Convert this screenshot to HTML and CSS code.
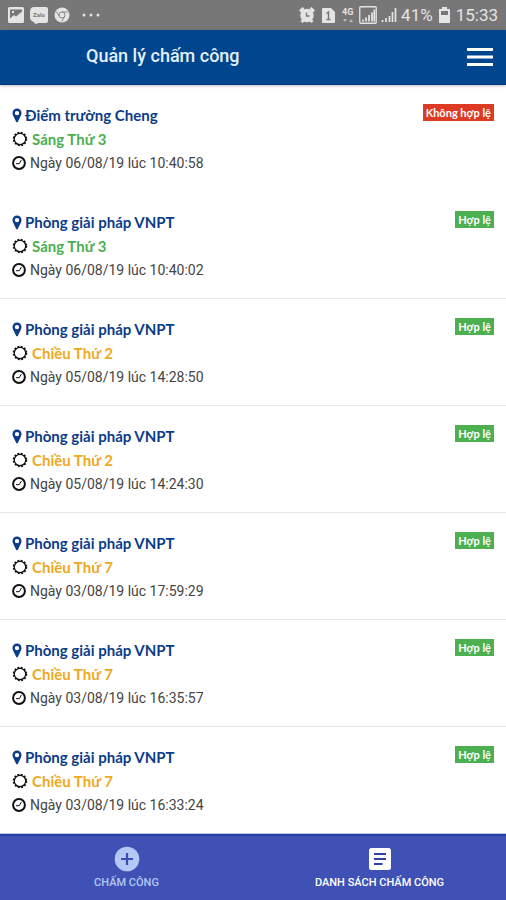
FILE: index.html
```html
<!DOCTYPE html>
<html lang="vi">
<head>
<meta charset="utf-8">
<meta name="viewport" content="width=device-width, initial-scale=1">
<title>Quản lý chấm công</title>
<link rel="stylesheet" href="styles.css">
</head>
<body>
<svg class="sprite" aria-hidden="true">
  <symbol id="pin" viewBox="0 0 10 15"><path fill="currentColor" fill-rule="evenodd" d="M5 0.5a4.5 4.5 0 0 1 4.5 4.5c0 1-.2 1.700-.6 2.500L5.900 13.800a1 1 0 0 1-1.800 0L1.100 7.500C.7 6.700.5 6 .5 5A4.500 4.500 0 0 1 5 .5zM5 2.900a2.200 2.200 0 1 0 0 4.400a2.200 2.200 0 0 0 0-4.400z"/></symbol>
  <symbol id="sun" viewBox="0 0 16 16"><circle cx="8" cy="8" r="5.700" fill="none" stroke="currentColor" stroke-width="1.200"/><circle cx="8" cy="8" r="6.300" fill="none" stroke="currentColor" stroke-width="1.900" stroke-dasharray="1.900 1.398"/></symbol>
  <symbol id="clock" viewBox="0 0 14 14"><circle cx="7" cy="7" r="5.900" fill="none" stroke="currentColor" stroke-width="2"/><path d="M4 7.700H7.300L9.400 4" fill="none" stroke="currentColor" stroke-width="1"/></symbol>
</svg>

<div class="status">
  <div class="status-group">
    <svg width="16" height="16" viewBox="0 0 16 16"><path fill="#e4e4e4" fill-rule="evenodd" d="M1.500 0h13A1.500 1.500 0 0 1 16 1.500v13a1.500 1.500 0 0 1-1.500 1.500h-13A1.500 1.500 0 0 1 0 14.500v-13A1.500 1.500 0 0 1 1.500 0zM2 2.500v9l4-3.500 2 1.500 6-5V2.500zM4 4h2v2H4z"/></svg>
    <svg width="18" height="17" viewBox="0 0 18 17"><path fill="#e4e4e4" d="M4 0h12q2 0 2 2v12q0 2-2 2H9l-4 1-1-2q-4-1-4-5V5q0-5 4-5z"/><text x="9" y="10" text-anchor="middle" class="zalo">Zalo</text></svg>
    <svg width="16" height="16" viewBox="0 0 16 16"><circle cx="8" cy="8" r="7.500" fill="#e4e4e4"/><circle cx="8" cy="8" r="3" fill="none" stroke="#888" stroke-width="1"/><path d="M8 5h6M5.400 9.500 2.500 4.500M10.600 9.500 7.700 14.500" stroke="#888" stroke-width="1"/></svg>
    <svg class="dots" width="18" height="4" viewBox="0 0 18 4"><g fill="#e4e4e4"><circle cx="2" cy="2" r="1.500"/><circle cx="9" cy="2" r="1.500"/><circle cx="16" cy="2" r="1.500"/></g></svg>
  </div>
  <div class="status-group status-right">
    <svg class="alarm" width="16" height="16" viewBox="0 0 16 16"><path stroke="#e4e4e4" stroke-width="3" d="M1 4.500 4.500 1M11.500 1 15 4.500M2.500 15l2-2M13.500 15l-2-2"/><circle cx="8" cy="8.500" r="6.700" fill="#e4e4e4"/><path d="M7.500 5.500V9h3" fill="none" stroke="#777" stroke-width="1.300"/></svg>
    <svg class="sim" width="13" height="15" viewBox="0 0 13 15"><path fill="#e4e4e4" d="M1 0h8l4 4v10q0 1-1 1H1q-1 0-1-1V1q0-1 1-1z"/><path d="M4.500 5.500 6.500 4v7.500M4.500 11.500h4" fill="none" stroke="#777" stroke-width="1.400"/></svg>
    <svg width="13" height="16" viewBox="0 0 13 16"><text x="0" y="8" class="net">4G</text><path fill="#bbb" d="M1 12h4l-2 3zM7 15h4l-2-3z"/></svg>
    <svg width="18" height="18" viewBox="0 0 18 18"><rect x=".75" y=".75" width="16.500" height="16.500" rx="1" fill="none" stroke="#e4e4e4" stroke-width="1.300"/><path stroke="#e4e4e4" stroke-width="1.800" d="M4 15.500v-2M7 15.500v-4M10 15.500V9M13 15.500v-9M15.300 15.500V3.500"/></svg>
    <svg width="16" height="18" viewBox="0 0 16 18"><path stroke="#e4e4e4" stroke-width="1.700" d="M1.500 16v-2M5 16v-4M8.500 16v-6M11.500 16V6M14.500 16V2"/></svg>
    <span>41%</span>
    <svg class="battery" width="11" height="16" viewBox="0 0 11 16"><path fill="#e4e4e4" fill-rule="evenodd" d="M3 0h5v2h3v14H0V2h3zM2 4v4h7V4z"/></svg>
    <span>15:33</span>
  </div>
</div>

<header class="bar">
  <h1>Quản lý chấm công</h1>
  <button class="menu" type="button" aria-label="Menu"><svg width="26" height="20" viewBox="0 0 26 20"><path stroke="#fff" stroke-width="3" d="M0 2.500h26M0 10h26M0 17.500h26"/></svg></button>
</header>

<main>
  <ul class="list">
    <li class="item plain">
      <div class="info">
        <h2 class="line place"><svg class="icon pin"><use href="#pin"/></svg>Điểm trường Cheng</h2>
        <p class="line shift morning"><svg class="icon sun"><use href="#sun"/></svg>Sáng Thứ 3</p>
        <p class="line time"><svg class="icon clock"><use href="#clock"/></svg>Ngày 06/08/19 lúc 10:40:58</p>
      </div>
      <span class="badge invalid">Không hợp lệ</span>
    </li>
    <li class="item">
      <div class="info">
        <h2 class="line place"><svg class="icon pin"><use href="#pin"/></svg>Phòng giải pháp VNPT</h2>
        <p class="line shift morning"><svg class="icon sun"><use href="#sun"/></svg>Sáng Thứ 3</p>
        <p class="line time"><svg class="icon clock"><use href="#clock"/></svg>Ngày 06/08/19 lúc 10:40:02</p>
      </div>
      <span class="badge">Hợp lệ</span>
    </li>
    <li class="item">
      <div class="info">
        <h2 class="line place"><svg class="icon pin"><use href="#pin"/></svg>Phòng giải pháp VNPT</h2>
        <p class="line shift"><svg class="icon sun"><use href="#sun"/></svg>Chiều Thứ 2</p>
        <p class="line time"><svg class="icon clock"><use href="#clock"/></svg>Ngày 05/08/19 lúc 14:28:50</p>
      </div>
      <span class="badge">Hợp lệ</span>
    </li>
    <li class="item">
      <div class="info">
        <h2 class="line place"><svg class="icon pin"><use href="#pin"/></svg>Phòng giải pháp VNPT</h2>
        <p class="line shift"><svg class="icon sun"><use href="#sun"/></svg>Chiều Thứ 2</p>
        <p class="line time"><svg class="icon clock"><use href="#clock"/></svg>Ngày 05/08/19 lúc 14:24:30</p>
      </div>
      <span class="badge">Hợp lệ</span>
    </li>
    <li class="item">
      <div class="info">
        <h2 class="line place"><svg class="icon pin"><use href="#pin"/></svg>Phòng giải pháp VNPT</h2>
        <p class="line shift"><svg class="icon sun"><use href="#sun"/></svg>Chiều Thứ 7</p>
        <p class="line time"><svg class="icon clock"><use href="#clock"/></svg>Ngày 03/08/19 lúc 17:59:29</p>
      </div>
      <span class="badge">Hợp lệ</span>
    </li>
    <li class="item">
      <div class="info">
        <h2 class="line place"><svg class="icon pin"><use href="#pin"/></svg>Phòng giải pháp VNPT</h2>
        <p class="line shift"><svg class="icon sun"><use href="#sun"/></svg>Chiều Thứ 7</p>
        <p class="line time"><svg class="icon clock"><use href="#clock"/></svg>Ngày 03/08/19 lúc 16:35:57</p>
      </div>
      <span class="badge">Hợp lệ</span>
    </li>
    <li class="item">
      <div class="info">
        <h2 class="line place"><svg class="icon pin"><use href="#pin"/></svg>Phòng giải pháp VNPT</h2>
        <p class="line shift"><svg class="icon sun"><use href="#sun"/></svg>Chiều Thứ 7</p>
        <p class="line time"><svg class="icon clock"><use href="#clock"/></svg>Ngày 03/08/19 lúc 16:33:24</p>
      </div>
      <span class="badge">Hợp lệ</span>
    </li>
  </ul>
</main>

<nav class="tabs">
  <button class="tab" type="button">
    <svg width="26" height="26" viewBox="0 0 26 26"><circle cx="13" cy="13" r="12.300" fill="currentColor"/><path stroke="#3b4db3" stroke-width="2.200" d="M13 7v12M7 13h12"/></svg>
    CHẤM CÔNG
  </button>
  <button class="tab active" type="button" aria-current="page">
    <svg width="26" height="26" viewBox="0 0 26 26"><rect x="2" y="2" width="22" height="22" rx="2.500" fill="currentColor"/><path stroke="#3040a8" stroke-width="2.200" d="M7 8h12M7 13h12M7 18h8.500"/></svg>
    DANH SÁCH CHẤM CÔNG
  </button>
</nav>
</body>
</html>
```

FILE: styles.css
```css
* {
  box-sizing: border-box;
}

body {
  display: flex;
  flex-direction: column;
  min-height: 100vh;
  margin: 0;
  background: #fff;
  font-family: Roboto, "Liberation Sans", sans-serif;
}

h1, h2, p, ul {
  margin: 0;
  padding: 0;
}

button {
  padding: 0;
  border: 0;
  background: none;
  font: inherit;
  cursor: pointer;
}

svg {
  flex: none;
}

.sprite {
  display: none;
}

.status {
  display: flex;
  align-items: center;
  justify-content: space-between;
  height: 30px;
  padding: 0 8px;
  background: #777;
  color: #e4e4e4;
  font-size: 17px;
}

.status-group {
  display: flex;
  align-items: center;
  gap: 6px;
}

.status-right {
  gap: 4px;
}

.dots {
  margin-left: 6px;
}

.alarm,
.sim {
  margin-right: 3px;
}

.battery {
  margin: 0 2px;
}

.zalo {
  fill: #777;
  font-size: 6px;
  font-weight: 700;
}

.net {
  fill: #e4e4e4;
  font-size: 9px;
  font-weight: 700;
}

.bar {
  display: flex;
  align-items: center;
  justify-content: space-between;
  height: 55px;
  padding: 0 13px 0 86px;
  border-bottom: 1px solid #003580;
  background: #00468e;
  box-shadow: 0 1px 3px rgba(0, 0, 0, 0.25);
  color: #e4effa;
}

.bar h1 {
  padding-bottom: 3px;
  font-size: 18px;
  font-weight: 500;
}

.menu {
  display: flex;
}

main {
  flex: 1;
}

.list {
  list-style: none;
}

.item {
  display: flex;
  align-items: flex-start;
  justify-content: space-between;
  padding: 18px 12px 16px;
  border-bottom: 1px solid #e6e6e6;
}

.item.plain {
  border-bottom-color: transparent;
}

.item:last-child {
  border-bottom-color: #b5cbe8;
}

.line {
  display: flex;
  align-items: center;
  gap: 3px;
  line-height: 24px;
  font-size: 15px;
  font-weight: 400;
}

.place {
  color: #0b3c88;
  font-family: Lato, sans-serif;
  font-weight: 700;
}

.shift {
  gap: 4px;
  color: #f0a81c;
  font-family: Lato, sans-serif;
  font-weight: 700;
}

.morning {
  color: #4caf50;
}

.time {
  gap: 4px;
  color: #444;
  font-size: 14px;
}

.icon {
  color: #111;
}

.pin {
  width: 10px;
  height: 15px;
  color: #0b3c88;
}

.sun {
  width: 16px;
  height: 16px;
}

.clock {
  width: 14px;
  height: 14px;
}

.badge {
  margin-top: 1px;
  padding: 0 3px;
  background: #4caf50;
  color: #fff;
  font-family: Lato, sans-serif;
  font-size: 11px;
  font-weight: 700;
  line-height: 17px;
}

.invalid {
  background: #dc3a22;
}

.tabs {
  display: grid;
  grid-template-columns: 1fr 1fr;
  height: 66px;
  border-top: 2px solid #2340a0;
  background: #3f51b5;
}

.tab {
  display: flex;
  flex-direction: column;
  align-items: center;
  justify-content: center;
  gap: 4px;
  color: #b4c8f6;
  font-size: 11px;
  font-weight: 500;
  line-height: 14px;
}

.active {
  color: #fff;
}
```
